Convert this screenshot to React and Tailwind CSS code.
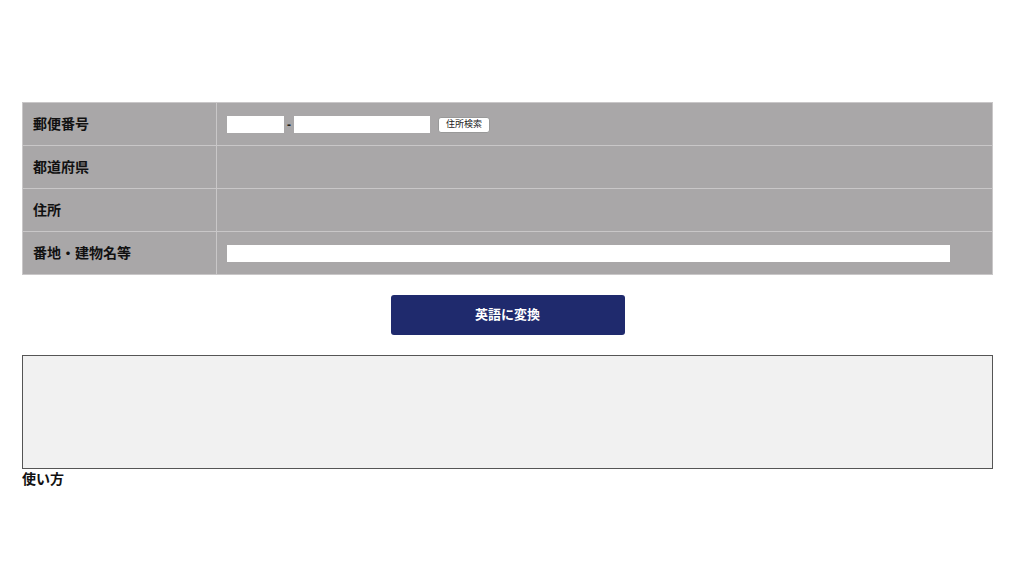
export default function App() {
  const font = { fontFamily: '"Liberation Sans", "Noto Sans CJK JP", sans-serif' };
  const rows = [
    { label: '郵便番号', kind: 'zip' },
    { label: '都道府県', kind: 'empty' },
    { label: '住所', kind: 'empty' },
    { label: '番地・建物名等', kind: 'text' },
  ];
  return (
    <div className="w-[1024px] h-[576px] bg-white pl-[22px] pt-[102px]" style={font}>
      <div className="w-[971px]">
        <table className="w-[971px] border-collapse bg-[#a9a7a8] border border-[#d4d2d3]">
          <tbody>
            {rows.map((r) => (
              <tr key={r.label} className="h-[43px]">
                <th className="w-[194px] border border-[#c9c7c8] pl-[10px] text-left text-[14px] font-bold text-[#111]">
                  {r.label}
                </th>
                <td className="border border-[#c9c7c8] pl-[10px]">
                  {r.kind === 'zip' && (
                    <div className="flex items-center mt-[1px]">
                      <div className="w-[57px] h-[17px] bg-white" />
                      <span className="mx-[3px] text-[12px] font-bold text-[#222] leading-none">-</span>
                      <div className="w-[136px] h-[17px] bg-white" />
                      <div className="ml-[8px] w-[52px] h-[16px] bg-white rounded-[3px] border border-[#999] flex items-center justify-center text-[9px] text-[#222] leading-none">
                        住所検索
                      </div>
                    </div>
                  )}
                  {r.kind === 'text' && <div className="w-[723px] h-[17px] bg-white" />}
                </td>
              </tr>
            ))}
          </tbody>
        </table>
        <div className="flex justify-center mt-[20px]">
          <button className="w-[234px] h-[40px] bg-[#1f2a6d] rounded-[3px] text-white text-[13px] font-bold">
            英語に変換
          </button>
        </div>
        <div className="mt-[20px] w-[971px] h-[114px] bg-[#f1f1f1] border border-[#555]" />
        <div className="text-[14px] font-bold text-[#111] leading-[18px] mt-[1px]">使い方</div>
      </div>
    </div>
  );
}
